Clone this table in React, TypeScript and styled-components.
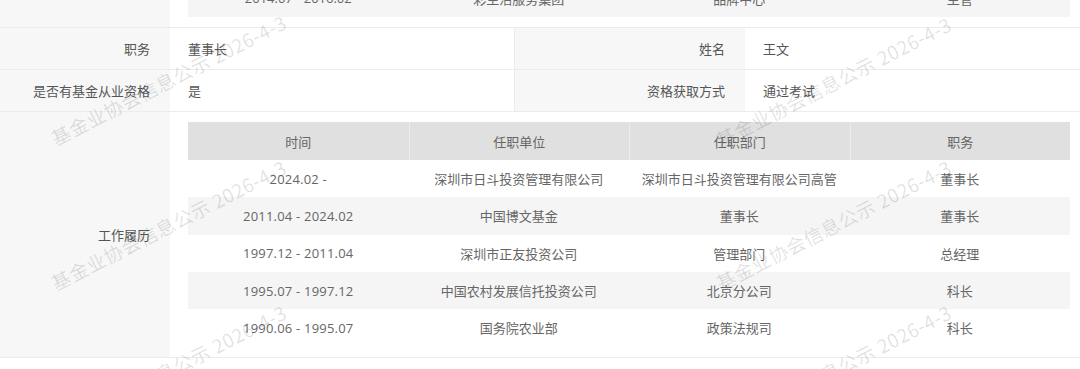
import React from "react";
import styled, { createGlobalStyle } from "styled-components";

const GlobalStyle = createGlobalStyle`
  html, body {
    margin: 0;
    padding: 0;
    background: #fff;
  }
  body {
    font-family: "Open Sans", "Noto Sans CJK SC", sans-serif;
  }
`;

interface IJob {
  time: string;
  unit: string;
  dept: string;
  title: string;
}

const jobs: IJob[] = [
  { time: "2024.02 -", unit: "深圳市日斗投资管理有限公司", dept: "深圳市日斗投资管理有限公司高管", title: "董事长" },
  { time: "2011.04 - 2024.02", unit: "中国博文基金", dept: "董事长", title: "董事长" },
  { time: "1997.12 - 2011.04", unit: "深圳市正友投资公司", dept: "管理部门", title: "总经理" },
  { time: "1995.07 - 1997.12", unit: "中国农村发展信托投资公司", dept: "北京分公司", title: "科长" },
  { time: "1990.06 - 1995.07", unit: "国务院农业部", dept: "政策法规司", title: "科长" }
];

const marks = [
  { x: 57, y: 148 },
  { x: 57, y: 293 },
  { x: 57, y: 438 },
  { x: 722, y: 150 },
  { x: 722, y: 293 },
  { x: 722, y: 438 }
];

const App: React.FunctionComponent = () => {
  return (
    <Page>
      <GlobalStyle />
      <TopRow>
        <Label />
        <TableCell>
          <BodyRow $striped>
            <Cell>2014.07 - 2016.02</Cell>
            <Cell>彩生活服务集团</Cell>
            <Cell>品牌中心</Cell>
            <Cell>主管</Cell>
          </BodyRow>
        </TableCell>
      </TopRow>

      <Row $split>
        <Label>职务</Label>
        <Value $divider>董事长</Value>
        <Label>姓名</Label>
        <Value>王文</Value>
      </Row>

      <Row $split>
        <Label>是否有基金从业资格</Label>
        <Value $divider>是</Value>
        <Label>资格获取方式</Label>
        <Value>通过考试</Value>
      </Row>

      <Row>
        <Label>工作履历</Label>
        <TableCell>
          <HeadRow>
            <HeadCell>时间</HeadCell>
            <HeadCell>任职单位</HeadCell>
            <HeadCell>任职部门</HeadCell>
            <HeadCell>职务</HeadCell>
          </HeadRow>
          {jobs.map((job, i) => (
            <BodyRow key={job.time} $striped={i % 2 === 1}>
              <Cell $latin>{job.time}</Cell>
              <Cell>{job.unit}</Cell>
              <Cell>{job.dept}</Cell>
              <Cell>{job.title}</Cell>
            </BodyRow>
          ))}
        </TableCell>
      </Row>

      {marks.map(m => (
        <Mark key={`${m.x}-${m.y}`} $x={m.x} $y={m.y}>
          基金业协会信息公示 2026-4-3
        </Mark>
      ))}
    </Page>
  );
};

const Page = styled.div`
  position: relative;
  width: 1080px;
  height: 369px;
  overflow: hidden;
  background: #fff;
  color: #666;
  font-size: 13px;
`;

const Row = styled.div<{ $split?: boolean }>`
  display: grid;
  grid-template-columns: ${p => (p.$split ? "170px 345px 230px 1fr" : "170px 1fr")};
  min-height: 42px;
  box-sizing: border-box;
  border-bottom: 1px solid #ececec;
`;

const TopRow = styled(Row)`
  margin-top: -30.33px;
`;

const Label = styled.div`
  display: flex;
  align-items: center;
  justify-content: flex-end;
  padding-right: 20px;
  background: #f7f7f7;
  color: #555;
  white-space: nowrap;
`;

const Value = styled.div<{ $divider?: boolean }>`
  display: flex;
  align-items: center;
  padding-left: 18px;
  color: #555;
  border-right: ${p => (p.$divider ? "1px solid #ececec" : "none")};
`;

const TableCell = styled.div`
  padding: 10px 10px 10px 18px;
`;

const HeadRow = styled.div`
  display: grid;
  grid-template-columns: repeat(4, 1fr);
  height: 38px;
  background: #e0e0e0;
`;

const HeadCell = styled.div`
  display: flex;
  align-items: center;
  justify-content: center;
  color: #666;

  & + & {
    border-left: 1px solid #ececec;
  }
`;

const BodyRow = styled.div<{ $striped?: boolean }>`
  display: grid;
  grid-template-columns: repeat(4, 1fr);
  height: 37.33px;
  background: ${p => (p.$striped ? "#f5f5f5" : "transparent")};
`;

const Cell = styled.div<{ $latin?: boolean }>`
  display: flex;
  align-items: center;
  justify-content: center;
  color: #666;
  white-space: nowrap;
  letter-spacing: ${p => (p.$latin ? "0.2px" : "0")};
`;

const Mark = styled.span<{ $x: number; $y: number }>`
  position: absolute;
  left: ${p => p.$x}px;
  top: ${p => p.$y - 20}px;
  transform-origin: 0 100%;
  transform: rotate(-27deg);
  font-family: "Noto Sans CJK SC", sans-serif;
  font-size: 19px;
  line-height: 20px;
  letter-spacing: 0.5px;
  white-space: nowrap;
  color: rgba(0, 0, 0, 0.12);
  pointer-events: none;
`;

export default App;
